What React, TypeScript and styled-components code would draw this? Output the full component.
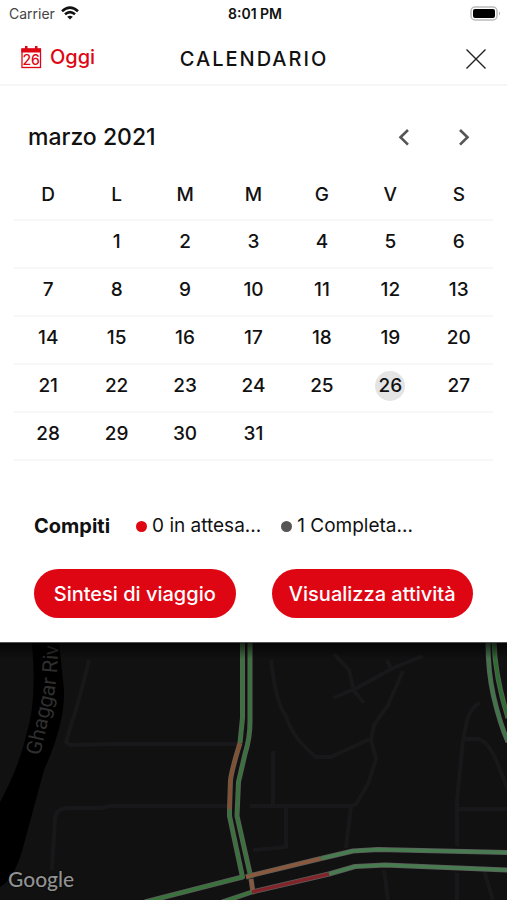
import React from "react";
import styled, { createGlobalStyle } from "styled-components";

const RED = "#df0614";

const GlobalStyle = createGlobalStyle`
  * { box-sizing: border-box; }
  body {
    margin: 0;
    background: #111;
    color: #111;
    font-family: Inter, "Liberation Sans", sans-serif;
  }
  button { font: inherit; cursor: pointer; }
`;

const Page = styled.div`
  display: flex;
  flex-direction: column;
  min-height: 100vh;
`;

const Sheet = styled.main`
  background: #fff;
  padding-bottom: 24px;
`;

const StatusBar = styled.div`
  display: grid;
  grid-template-columns: 1fr auto 1fr;
  align-items: center;
  height: 28px;
  padding: 0 6px 2px 9px;
  font-size: 14px;
`;

const Carrier = styled.span`
  display: flex;
  align-items: center;
  gap: 6px;
  color: #444;
`;

const Clock = styled.span`
  font-size: 14px;
  font-weight: 600;
`;

const BatteryIcon = styled.svg`
  justify-self: end;
`;

const Header = styled.header`
  display: grid;
  grid-template-columns: 1fr auto 1fr;
  align-items: center;
  height: 58px;
  padding: 6px 19px 0 20px;
  border-bottom: 2px solid #f6f6f6;
`;

const TodayButton = styled.button`
  display: flex;
  align-items: center;
  gap: 8px;
  justify-self: start;
  height: 32px;
  padding: 0 0 4px;
  border: 0;
  background: none;
  color: ${RED};
  && { font-size: 20px; font-weight: 500; }
`;

const Title = styled.h1`
  margin: 0;
  font-size: 20px;
  font-weight: 500;
  letter-spacing: 2px;
`;

const IconButton = styled.button<{ $end?: boolean }>`
  display: grid;
  place-items: center;
  justify-self: ${(p) => (p.$end ? "end" : "auto")};
  padding: 0;
  border: 0;
  background: none;
  color: #222;
`;

const MonthBar = styled.div`
  display: flex;
  align-items: center;
  justify-content: space-between;
  height: 97px;
  padding: 4px 30px 0 28px;
`;

const Month = styled.h2`
  margin: 0;
  font-size: 23px;
  font-weight: 500;
`;

const MonthNav = styled.div`
  display: flex;
  gap: 38px;
`;

const CalendarWrap = styled.div`
  padding: 0 14px;
`;

const Calendar = styled.table`
  width: 100%;
  table-layout: fixed;
  border-collapse: collapse;
  font-size: 19px;
  font-weight: 500;
  tr { border-bottom: 2px solid #f7f7f7; }
  th { padding: 0 0 13px; font-weight: 500; }
  td { height: 48px; padding: 0 0 5px; text-align: center; }
`;

const Day = styled.button<{ $today: boolean }>`
  width: 30px;
  height: 30px;
  padding: 0;
  border: 0;
  border-radius: 50%;
  background: ${(p) => (p.$today ? "#e4e4e4" : "none")};
  color: inherit;
  white-space: nowrap;
`;

const Tasks = styled.section`
  display: flex;
  align-items: center;
  gap: 26px;
  margin-top: 51px;
  padding: 0 34px;
  font-size: 19px;
  line-height: 28px;
`;

const TasksTitle = styled.h3`
  margin: 0;
  font-size: 20px;
  font-weight: 700;
`;

const TaskList = styled.div`
  display: flex;
  gap: 20px;
`;

const Task = styled.span<{ $color: string }>`
  display: flex;
  align-items: center;
  gap: 5px;
  white-space: nowrap;
  &::before {
    content: "";
    width: 11px;
    height: 11px;
    border-radius: 50%;
    background: ${(p) => p.$color};
  }
`;

const Actions = styled.div`
  display: grid;
  grid-template-columns: 1fr 1fr;
  gap: 36px;
  margin-top: 29px;
  padding: 0 34px;
`;

const ActionButton = styled.button`
  height: 49px;
  padding: 0;
  border: 0;
  border-radius: 25px;
  background: ${RED};
  color: #fff;
  white-space: nowrap;
  && { font-size: 20px; font-weight: 500; }
`;

const MapArea = styled.section`
  position: relative;
  display: flex;
  flex: 1 0 240px;
  border-top: 1px solid #555;
  background: #111;
  overflow: hidden;
`;

const MapDrawing = styled.svg`
  flex: 1;
  width: 100%;
`;

const MapShade = styled.div`
  position: absolute;
  inset: 0 0 auto;
  height: 16px;
  background: linear-gradient(#000a, #0000);
`;

const Attribution = styled.span`
  position: absolute;
  left: 8px;
  bottom: 8px;
  color: #929292;
  font-family: Lato, sans-serif;
  font-size: 21px;
  font-weight: 500;
  line-height: 26px;
  text-shadow: 0 0 2px #000;
`;

const WEEKDAYS = [
  ["D", "domenica"],
  ["L", "lunedì"],
  ["M", "martedì"],
  ["M", "mercoledì"],
  ["G", "giovedì"],
  ["V", "venerdì"],
  ["S", "sabato"],
];
const TODAY = 26;
const WEEKS = Array.from({ length: 5 }, (_, w) =>
  Array.from({ length: 7 }, (_, d) => {
    const day = w * 7 + d;
    return day >= 1 && day <= 31 ? day : null;
  })
);

const WifiIcon = () => (
  <svg width="18" height="14" viewBox="0 0 18 14" fill="none" stroke="#111" strokeWidth="2.5" aria-hidden="true">
    <path d="M1 5.2Q9-2 17 5.2M4 8.3Q9 4 14 8.3" />
    <path d="M6.2 10.7Q9 8.6 11.8 10.7L9 13.5Z" fill="#111" stroke="none" />
  </svg>
);

const Battery = () => (
  <BatteryIcon width="31" height="15" viewBox="0 0 31 15" aria-hidden="true">
    <rect x="1" y="1" width="26" height="13" rx="4" fill="#fff" stroke="#bbb" strokeWidth="1.5" />
    <rect x="3" y="3" width="22" height="9" rx="2" fill="#000" />
    <path d="M29 5.5Q31 7.5 29 9.5Z" fill="#aaa" />
  </BatteryIcon>
);

const CalendarIcon = () => (
  <svg width="22" height="23" viewBox="0 0 22 23" aria-hidden="true">
    <rect x="2" y="3" width="18.5" height="18.5" fill="#fff" stroke={RED} strokeWidth="1.3" />
    <path d="M1.4 2.4H21V6.5H1.4ZM5 0H7.5V3H5ZM15 0H17.5V3H15Z" fill={RED} />
    <text x="11.2" y="19" textAnchor="middle" fontFamily="Inter" fontSize="14" fill={RED}>26</text>
  </svg>
);

const CloseIcon = () => (
  <svg width="24" height="24" viewBox="0 0 24 24" stroke="currentColor" strokeWidth="1.4" aria-hidden="true">
    <path d="M2.500 2.500L21.500 21.500M21.500 2.500L2.500 21.500" />
  </svg>
);

const Chevron = ({ right = false }: { right?: boolean }) => (
  <svg width="24" height="24" viewBox="0 0 24 24" fill="none" stroke="#555" strokeWidth="2.6" aria-hidden="true">
    <path d={right ? "M7 5L14.500 12.300L7 19.600" : "M17 5L9.500 12.300L17 19.600"} />
  </svg>
);

const LANES = [
  { d: "M242.500 642V718L240 743", color: "#39723c" },
  { d: "M240 743Q232 769 230.500 780L229.500 809", color: "#84502f" },
  { d: "M229.500 809V816L242.500 877L145 902", color: "#39723c" },
  { d: "M250 642V722Q250 738 245 754L238.500 782L237 816L251 878", color: "#39723c" },
  { d: "M222 902L252 892", color: "#39723c" },
  { d: "M246 877L253 875L321 858.500", color: "#89583d" },
  { d: "M251 879L253 892", color: "#89583d" },
  { d: "M252 892L329 874", color: "#81252b" },
  { d: "M321 858.500L353 851L378 849.500L508 852.500", color: "#487b50" },
  { d: "M329 874L355 866.500L385 865L508 870", color: "#487b50" },
  { d: "M488 642Q488 672 493.500 696Q500 724 508 742", color: "#40754a" },
  { d: "M494 642Q495 676 508 718", color: "#2c6e31" },
];

const MINOR_ROADS =
  "M89 660L80 696L66 742L70 745L112 744H238" +
  "M52 870L55 818Q57 808 68 808H102L110 806H228M250 806H353" +
  "M271 660Q276 704 286 716Q293 739 316 757H331L370 739" +
  "M334 654L349 670L354 691L364 703M333 698L357 688L393 668L423 656" +
  "M387 660L391 668M403 671L388 705L374 725L371 740L376 759L368 784L356 804L351 806L346 848" +
  "M273 751V804M286 806V847L253 850" +
  "M480 703Q470 707 466 725L463 740L457 800V846M463 739H478Q488 741 497 762L508 790M459 809H508" +
  "M384 870L388 900M457 873V900M484 870L493 900";

const TrafficMap = () => (
  <MapDrawing viewBox="0 643 507 257" preserveAspectRatio="xMidYMin slice" role="img" aria-label="Mappa del traffico">
    <path d="M32 643Q37 700 27 732Q20 765 0 802V887Q16 878 25 840L44 770Q65 724 64 690L59 643Z" fill="#000" />
    <path d={MINOR_ROADS} fill="none" stroke="#18181a" strokeWidth="4" strokeLinejoin="round" />
    <path id="river-line" d="M40 756L50 712Q58 686 59 630" fill="none" />
    <text fontFamily="Roboto, sans-serif" fontSize="21" fill="#2f2f2f">
      <textPath href="#river-line">Ghaggar Riv</textPath>
    </text>
    <g fill="none" strokeLinejoin="round">
      {LANES.map((lane) => (
        <path key={`edge ${lane.d}`} d={lane.d} stroke="#5d5f5c" strokeWidth="5" />
      ))}
      {LANES.map((lane) => (
        <path key={lane.d} d={lane.d} stroke={lane.color} strokeWidth="3.4" />
      ))}
    </g>
  </MapDrawing>
);

export default function App() {
  return (
    <Page>
      <GlobalStyle />
      <Sheet>
        <StatusBar>
          <Carrier>Carrier <WifiIcon /></Carrier>
          <Clock>8:01 PM</Clock>
          <Battery />
        </StatusBar>
        <Header>
          <TodayButton type="button"><CalendarIcon />Oggi</TodayButton>
          <Title>CALENDARIO</Title>
          <IconButton type="button" aria-label="Chiudi" $end><CloseIcon /></IconButton>
        </Header>
        <MonthBar>
          <Month>marzo 2021</Month>
          <MonthNav>
            <IconButton type="button" aria-label="Mese precedente"><Chevron /></IconButton>
            <IconButton type="button" aria-label="Mese successivo"><Chevron right /></IconButton>
          </MonthNav>
        </MonthBar>
        <CalendarWrap>
          <Calendar>
            <thead>
              <tr>
                {WEEKDAYS.map(([letter, name]) => (
                  <th key={name} scope="col" abbr={name}>{letter}</th>
                ))}
              </tr>
            </thead>
            <tbody>
              {WEEKS.map((week, w) => (
                <tr key={w}>
                  {week.map((day, d) => (
                    <td key={d}>
                      {day && <Day type="button" $today={day === TODAY}>{day}</Day>}
                    </td>
                  ))}
                </tr>
              ))}
            </tbody>
          </Calendar>
        </CalendarWrap>
        <Tasks>
          <TasksTitle>Compiti</TasksTitle>
          <TaskList>
            <Task $color={RED}>0 in attesa...</Task>
            <Task $color="#555">1 Completa...</Task>
          </TaskList>
        </Tasks>
        <Actions>
          <ActionButton type="button">Sintesi di viaggio</ActionButton>
          <ActionButton type="button">Visualizza attività</ActionButton>
        </Actions>
      </Sheet>
      <MapArea>
        <TrafficMap />
        <MapShade />
        <Attribution>Google</Attribution>
      </MapArea>
    </Page>
  );
}
